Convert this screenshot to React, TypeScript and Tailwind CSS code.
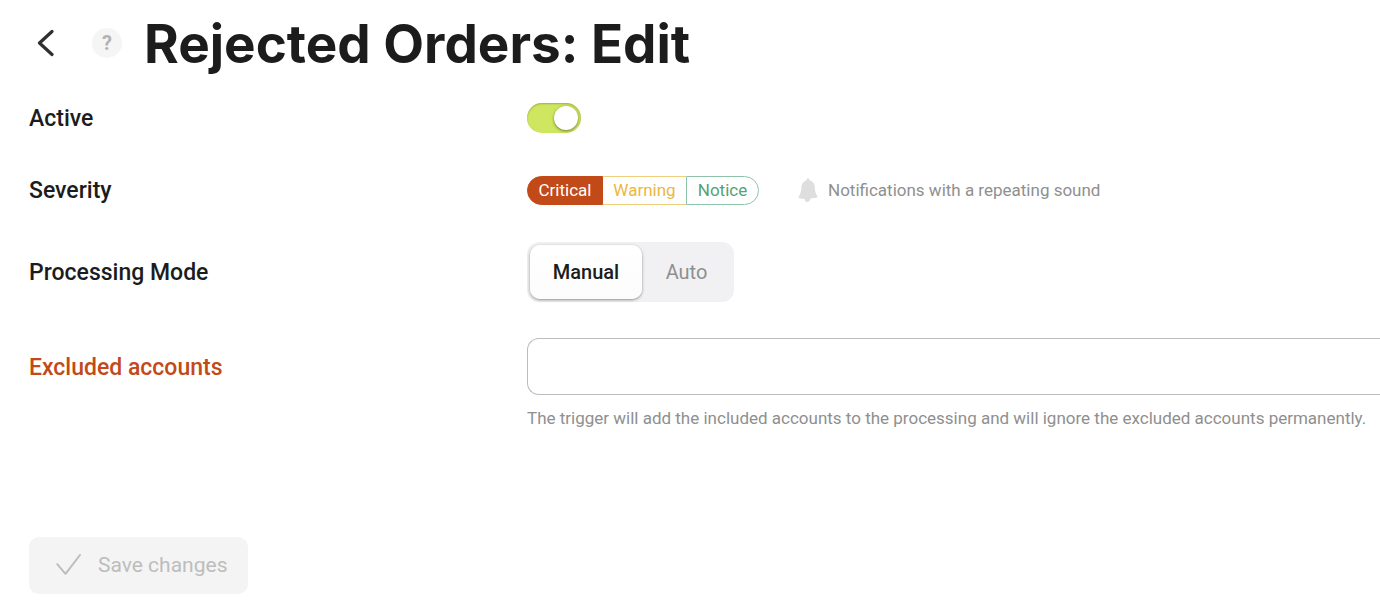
import React, { useState } from "react";

const labelStyle = "pt-0.5 text-[23px] leading-7 font-medium";
const rowStyle = "grid grid-cols-[498px_1fr] items-center";

export default function App() {
  const [active, setActive] = useState(true);
  const [severity, setSeverity] = useState("critical");
  const [mode, setMode] = useState("manual");

  return (
    <main className="overflow-hidden bg-white pb-3 pl-[29px] font-['Roboto',sans-serif] text-[#1c1c1c]">
      {/* Title */}
      <header className="flex h-[86px] items-center">
        <button type="button" aria-label="Back" className="w-8 pl-2">
          <svg width="17" height="28" viewBox="0 0 17 28" fill="none">
            <path
              d="M15 2.5 L2.5 14 L15 25.5"
              stroke="#303030"
              strokeWidth="3.2"
              strokeLinecap="round"
              strokeLinejoin="round"
            />
          </svg>
        </button>
        <button
          type="button"
          aria-label="Help"
          className="ml-[31px] size-[30px] rounded-full bg-[#f5f5f5] text-xl leading-[30px] font-bold text-[#b2b2b2]"
        >
          ?
        </button>
        <h1 className="ml-[22px] pt-0.5 font-['Inter',sans-serif] text-[53px] leading-[84px] font-bold whitespace-nowrap">
          Rejected Orders: Edit
        </h1>
      </header>

      {/* Active */}
      <div className={`${rowStyle} h-16`}>
        <label htmlFor="active" className={labelStyle}>
          Active
        </label>
        <label className="relative flex h-[30px] w-[54px] items-center rounded-full bg-[#cfe760] shadow-[inset_0_1px_2px_#9db044]">
          <input
            id="active"
            type="checkbox"
            checked={active}
            onChange={(e) => setActive(e.target.checked)}
            className="peer absolute inset-0 cursor-pointer appearance-none rounded-full"
          />
          <span className="pointer-events-none ml-[3px] size-6 rounded-full bg-white shadow-[0_1px_3px_#6d7a30] peer-checked:ml-[27px]" />
        </label>
      </div>

      {/* Severity */}
      <div className={`${rowStyle} h-20`}>
        <span className={labelStyle}>Severity</span>
        <div className="flex items-center">
          <div className="flex h-[29px] text-[17px] leading-[27px]">
            <button
              type="button"
              aria-pressed={severity === "critical"}
              onClick={() => setSeverity("critical")}
              className="w-[76px] rounded-l-full border border-[#c24a18] bg-[#c24a18] text-white"
            >
              Critical
            </button>
            <button
              type="button"
              aria-pressed={severity === "warning"}
              onClick={() => setSeverity("warning")}
              className="w-[83px] border-y border-[#edcf7c] text-[#edb63f]"
            >
              Warning
            </button>
            <button
              type="button"
              aria-pressed={severity === "notice"}
              onClick={() => setSeverity("notice")}
              className="w-[73px] rounded-r-full border border-[#8fc3a9] text-[#55a272]"
            >
              Notice
            </button>
          </div>
          <svg className="ml-[39px]" width="20" height="26" viewBox="0 0 20 26">
            <path
              d="M10 1 C10.7 1 11 2.3 11.2 3.3 C15 4 16.7 7 16.8 10.5 C16.9 14.5 17.8 17 19.5 19.5 C19.5 20.5 18.5 20.8 17 21 L12.5 21.6 C12 24.5 9.8 25.6 8 24.7 C6.8 24.1 6.4 23 6.6 22 L2.2 21.5 C1 21.2 0.4 20.4 0.6 19.5 C2.6 17.5 3.1 14.5 3.3 10.5 C3.5 7 5.2 4.2 8.6 3.3 C8.8 2.3 9.3 1 10 1 Z"
              fill="#dedede"
            />
          </svg>
          <span className="ml-2.5 text-[17px] leading-6 text-[#8f8f8f]">
            Notifications with a repeating sound
          </span>
        </div>
      </div>

      {/* Processing mode */}
      <div className={`${rowStyle} h-[84px]`}>
        <span className={labelStyle}>Processing Mode</span>
        <div className="flex h-[60px] w-[207px] rounded-xl bg-[#f1f1f3] p-[3px] text-xl">
          <button
            type="button"
            aria-pressed={mode === "manual"}
            onClick={() => setMode("manual")}
            className="w-28 rounded-[10px] bg-gradient-to-b from-white to-[#fcfcfc] font-medium shadow-[0_1px_3px_#8d8d8d]"
          >
            Manual
          </button>
          <button
            type="button"
            aria-pressed={mode === "auto"}
            onClick={() => setMode("auto")}
            className="flex-1 text-[#8f8f8f]"
          >
            Auto
          </button>
        </div>
      </div>

      {/* Excluded accounts */}
      <div className={`${rowStyle} mt-6`}>
        <label htmlFor="excluded" className={`${labelStyle} text-[#c24a18]`}>
          Excluded accounts
        </label>
        <input
          id="excluded"
          type="text"
          className="h-[57px] w-full rounded-l-xl border border-r-0 border-[#bcbcbc] px-4 text-xl outline-none"
        />
        <p className="col-start-2 mt-[11px] text-[17px] leading-6 text-[#8f8f8f]">
          The trigger will add the included accounts to the processing and will
          ignore the excluded accounts permanently.
        </p>
      </div>

      {/* Save */}
      <button
        type="button"
        disabled
        className="mt-[107px] flex h-[57px] w-[219px] items-center rounded-[10px] bg-[#f4f4f4] pl-[27px] text-[21px] text-[#bdbdbd]"
      >
        <svg width="26" height="26" viewBox="0 0 26 26" fill="none">
          <path
            d="M1.2 11.2 L9.5 20.8 L24 2"
            stroke="#bdbdbd"
            strokeWidth="2"
            strokeLinecap="round"
            strokeLinejoin="round"
          />
        </svg>
        <span className="ml-4">Save changes</span>
      </button>
    </main>
  );
}
